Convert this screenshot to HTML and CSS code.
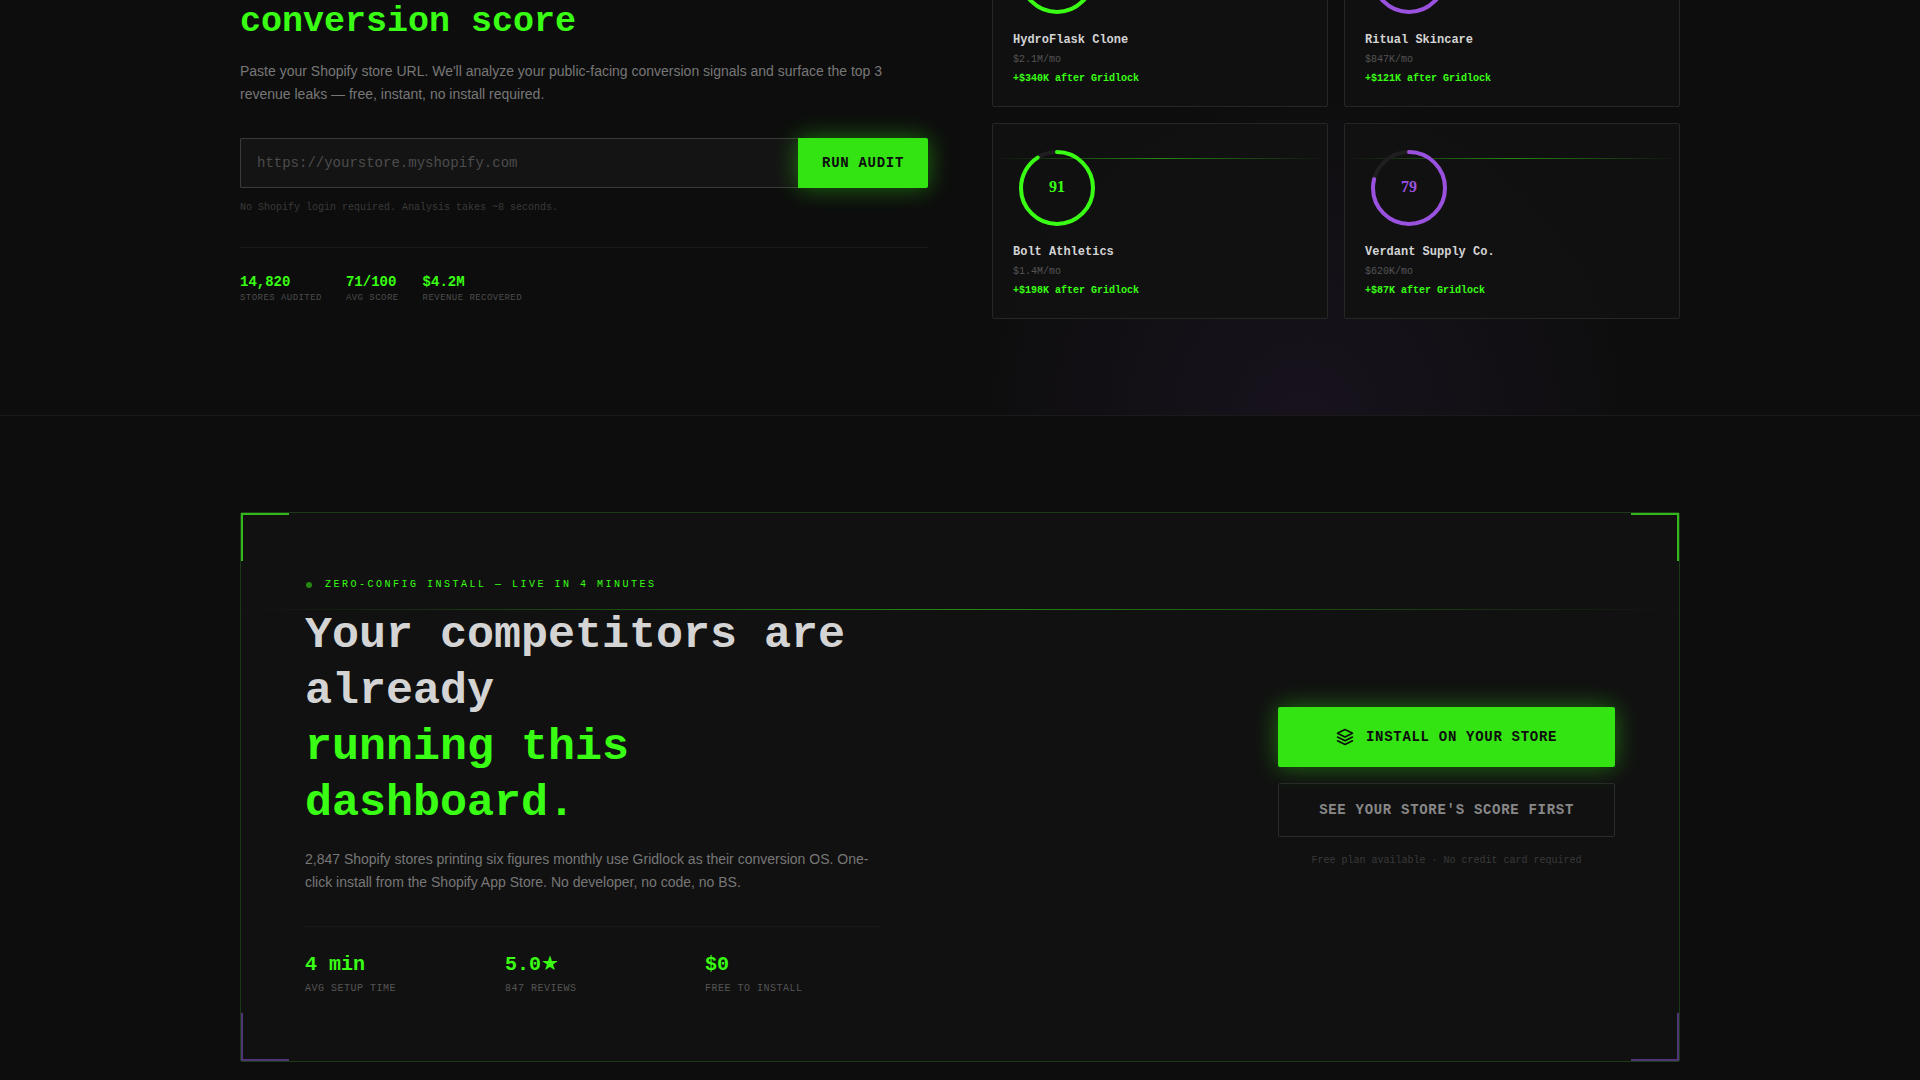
FILE: index.html
```html
<!DOCTYPE html>
<html lang="en">
<head>
<meta charset="utf-8">
<meta name="viewport" content="width=device-width, initial-scale=1">
<title>Gridlock</title>
<link rel="stylesheet" href="styles.css">
</head>
<body>
<section class="audit">
  <div class="container audit-grid">
    <div class="audit-intro">
      <h2 class="audit-title">conversion score</h2>
      <p class="lead">Paste your Shopify store URL. We'll analyze your public-facing conversion signals and surface the top 3 revenue leaks — free, instant, no install required.</p>
      <form class="audit-form">
        <input class="audit-input" type="url" aria-label="Store URL" placeholder="https://yourstore.myshopify.com">
        <button class="btn btn-primary btn-audit" type="button">RUN AUDIT</button>
      </form>
      <p class="hint">No Shopify login required. Analysis takes ~8 seconds.</p>
      <dl class="mini-stats">
        <div class="stat"><dd class="mini-value">14,820</dd><dt class="mini-label">STORES AUDITED</dt></div>
        <div class="stat"><dd class="mini-value">71/100</dd><dt class="mini-label">AVG SCORE</dt></div>
        <div class="stat"><dd class="mini-value">$4.2M</dd><dt class="mini-label">REVENUE RECOVERED</dt></div>
      </dl>
    </div>
    <div class="cards">
      <article class="card">
        <svg class="ring ring-green" viewBox="0 0 88 88" aria-hidden="true"><circle class="track" cx="44" cy="44" r="36"/><circle class="arc" cx="44" cy="44" r="36" pathLength="100" stroke-dasharray="94 100"/></svg>
        <h3 class="store">HydroFlask Clone</h3>
        <p class="revenue">$2.1M/mo</p>
        <p class="gain">+$340K after Gridlock</p>
      </article>
      <article class="card">
        <svg class="ring ring-purple" viewBox="0 0 88 88" aria-hidden="true"><circle class="track" cx="44" cy="44" r="36"/><circle class="arc" cx="44" cy="44" r="36" pathLength="100" stroke-dasharray="87 100"/></svg>
        <h3 class="store">Ritual Skincare</h3>
        <p class="revenue">$847K/mo</p>
        <p class="gain">+$121K after Gridlock</p>
      </article>
      <article class="card scan">
        <svg class="ring ring-green" viewBox="0 0 88 88"><circle class="track" cx="44" cy="44" r="36"/><circle class="arc" cx="44" cy="44" r="36" pathLength="100" stroke-dasharray="91 100"/><text class="score" x="44" y="48">91</text></svg>
        <h3 class="store">Bolt Athletics</h3>
        <p class="revenue">$1.4M/mo</p>
        <p class="gain">+$198K after Gridlock</p>
      </article>
      <article class="card scan">
        <svg class="ring ring-purple" viewBox="0 0 88 88"><circle class="track" cx="44" cy="44" r="36"/><circle class="arc" cx="44" cy="44" r="36" pathLength="100" stroke-dasharray="79 100"/><text class="score" x="44" y="48">79</text></svg>
        <h3 class="store">Verdant Supply Co.</h3>
        <p class="revenue">$620K/mo</p>
        <p class="gain">+$87K after Gridlock</p>
      </article>
    </div>
  </div>
</section>
<section class="install">
  <div class="container">
    <div class="panel scan">
      <span class="corner corner-tl"></span><span class="corner corner-tr"></span><span class="corner corner-bl"></span><span class="corner corner-br"></span>
      <div class="pitch">
        <p class="eyebrow"><span class="dot"></span>ZERO-CONFIG INSTALL — LIVE IN 4 MINUTES</p>
        <h2 class="pitch-title">Your competitors are already<br><span class="accent">running this dashboard.</span></h2>
        <p class="lead">2,847 Shopify stores printing six figures monthly use Gridlock as their conversion OS. One-click install from the Shopify App Store. No developer, no code, no BS.</p>
        <dl class="stats">
          <div class="stat"><dd class="value">4 min</dd><dt class="label">AVG SETUP TIME</dt></div>
          <div class="stat"><dd class="value">5.0★</dd><dt class="label">847 REVIEWS</dt></div>
          <div class="stat"><dd class="value">$0</dd><dt class="label">FREE TO INSTALL</dt></div>
        </dl>
      </div>
      <div class="actions">
        <button class="btn btn-primary btn-install" type="button">
          <svg class="icon" viewBox="0 0 24 24" aria-hidden="true"><path d="M12 2 2 7l10 5 10-5-10-5z"/><path d="m2 17 10 5 10-5"/><path d="m2 12 10 5 10-5"/></svg>
          INSTALL ON YOUR STORE
        </button>
        <button class="btn btn-ghost" type="button">SEE YOUR STORE'S SCORE FIRST</button>
        <p class="fine">Free plan available · No credit card required</p>
      </div>
    </div>
  </div>
</section>
</body>
</html>
```
FILE: styles.css
```css
:root {
  --green: #39ff14;
  --purple: #9b51e0;
  --mono: "Liberation Mono", "DejaVu Sans", monospace;
  --sans: "Liberation Sans", sans-serif;
}
* { box-sizing: border-box; margin: 0; padding: 0; }
body { background: #0d0d0d; color: #d4d4d4; font-family: var(--sans); overflow-x: hidden; }
.container { width: 75%; margin: 0 auto; }

.audit {
  padding-bottom: 96px;
  border-bottom: 1px solid #1a1a1a;
  background: radial-gradient(circle 340px at 68% 100%, rgba(155, 81, 224, .07), rgba(155, 81, 224, .05) 40%, transparent);
}
.audit-grid { display: grid; grid-template-columns: 1fr 1fr; gap: 64px; align-items: end; }
.audit-intro { padding-bottom: 15px; }
.audit-title { font: 700 35px/44px var(--mono); color: var(--green); margin-bottom: 16px; }
.lead { font-size: 14px; line-height: 23px; color: #777; }
.audit-form { display: flex; margin-top: 32px; }
.audit-input {
  flex: 1; min-width: 0; height: 50px; padding: 0 16px;
  background: #141414; border: 1px solid #3a3a3a; border-right: 0; border-radius: 2px 0 0 2px;
  font: 14px var(--mono); color: #d4d4d4;
}
.audit-input::placeholder { color: #4c4c4c; opacity: 1; }
.btn { font: 700 14px/20px var(--mono); letter-spacing: .05em; border: 0; border-radius: 2px; cursor: pointer; }
.btn-primary { background: #33e312; color: #0d0d0d; box-shadow: 0 0 24px rgba(57, 255, 20, .4); }
.btn-audit { padding: 0 24px; border-radius: 0 2px 2px 0; }
.hint { font: 10px/15px var(--mono); color: #3a3a3a; margin: 12px 0 32px; }
.mini-stats { display: flex; gap: 24px; padding-top: 24px; border-top: 1px solid #1a1a1a; }
.stat { display: flex; flex-direction: column; }
.mini-value { font: 700 14px/20px var(--mono); color: var(--green); }
.mini-label { font: 9px/12px var(--mono); letter-spacing: .05em; color: #4c4c4c; }

/* the top row of cards starts above the fold line of the section */
.cards { display: grid; grid-template-columns: 1fr 1fr; gap: 16px; margin-top: -89px; }
.card { position: relative; padding: 20px; background: rgba(18, 18, 18, .85); border: 1px solid #262626; border-radius: 2px; }
.ring { position: relative; display: block; width: 88px; height: 88px; margin-bottom: 12px; }
.ring circle { fill: none; stroke-width: 4; }
.track { stroke: #1f1f1f; }
.arc { transform: rotate(-90deg); transform-origin: 44px 44px; stroke-linecap: round; }
.ring-green .arc { stroke: var(--green); }
.ring-purple .arc { stroke: var(--purple); }
.score { font: 700 16px "Liberation Serif", serif; text-anchor: middle; }
.ring-green .score { fill: var(--green); }
.ring-purple .score { fill: var(--purple); }
.store { font: 700 12px/16px var(--mono); color: #d4d4d4; margin-bottom: 4px; }
.revenue { font: 10px/15px var(--mono); color: #555; margin-bottom: 4px; }
.gain { font: 700 10px/15px var(--mono); color: var(--green); }
.scan::before {
  content: ""; position: absolute; left: 0; right: 0; top: 17.6%; height: 1px;
  background: linear-gradient(90deg, transparent, var(--green), transparent); opacity: .5;
}

.install { padding: 96px 0; }
.panel {
  position: relative; display: flex; justify-content: space-between; align-items: center;
  padding: 64px; background: #111; border: 1px solid #1d3a18; border-radius: 2px;
}
.corner { position: absolute; width: 48px; height: 48px; border: 0 solid #33b81c; }
.corner-tl { top: 0; left: 0; border-width: 2px 0 0 2px; }
.corner-tr { top: 0; right: 0; border-width: 2px 2px 0 0; }
.corner-bl { bottom: 0; left: 0; border-width: 0 0 2px 2px; border-color: #4f3679; }
.corner-br { bottom: 0; right: 0; border-width: 0 2px 2px 0; border-color: #4f3679; }
.pitch { flex: 0 1 576px; }
.eyebrow { display: flex; align-items: center; gap: 12px; font: 10px/15px var(--mono); letter-spacing: .25em; color: var(--green); margin-bottom: 16px; }
.dot { width: 6px; height: 6px; margin: 0 1px; border-radius: 50%; background: var(--green); opacity: .5; }
.pitch-title { font: 700 45px/56px var(--mono); color: #d4d4d4; margin-bottom: 16px; }
.accent { color: var(--green); }
.stats { display: grid; grid-template-columns: repeat(3, 1fr); gap: 24px; margin-top: 32px; padding-top: 24px; border-top: 1px solid #1a1a1a; }
.value { font: 700 20px/28px var(--mono); color: var(--green); margin-bottom: 2px; }
.label { font: 10px/16px var(--mono); letter-spacing: .05em; color: #555; }
.actions { display: flex; flex-direction: column; gap: 16px; }
.btn-install { display: flex; align-items: center; justify-content: center; gap: 12px; padding: 20px 40px; }
.icon { width: 18px; height: 18px; fill: none; stroke: currentColor; stroke-width: 2; stroke-linecap: round; stroke-linejoin: round; }
.btn-ghost { padding: 16px 40px; background: transparent; border: 1px solid #2a2a2a; color: #888; }
.fine { font: 10px/15px var(--mono); color: #3a3a3a; text-align: center; }
```
